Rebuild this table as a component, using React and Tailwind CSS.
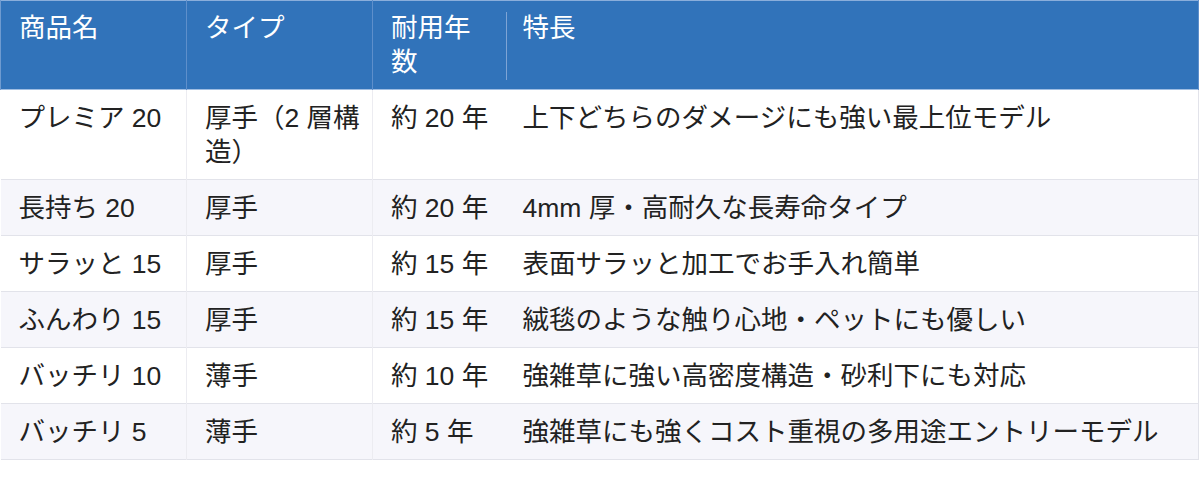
const rows = [
  { name: "プレミア 20", type: <>厚手（2 層構<br />造）</>, years: "約 20 年", feature: "上下どちらのダメージにも強い最上位モデル" },
  { name: "長持ち 20", type: "厚手", years: "約 20 年", feature: "4mm 厚・高耐久な長寿命タイプ" },
  { name: "サラッと 15", type: "厚手", years: "約 15 年", feature: "表面サラッと加工でお手入れ簡単" },
  { name: "ふんわり 15", type: "厚手", years: "約 15 年", feature: "絨毯のような触り心地・ペットにも優しい" },
  { name: "バッチリ 10", type: "薄手", years: "約 10 年", feature: "強雑草に強い高密度構造・砂利下にも対応" },
  { name: "バッチリ 5", type: "薄手", years: "約 5 年", feature: "強雑草にも強くコスト重視の多用途エントリーモデル" },
];

const App = () => {
  return (
    <div
      className="w-[1200px] h-[492px] bg-white text-[#222] text-[26.5px] leading-[34px]"
      style={{ fontFamily: '"Liberation Sans", "Noto Sans CJK JP", sans-serif' }}
    >
      <table className="w-[1199px] table-fixed border-collapse">
        <colgroup>
          <col className="w-[186px]" />
          <col className="w-[186px]" />
          <col className="w-[133px]" />
          <col />
        </colgroup>
        <thead>
          <tr className="bg-[#3173ba] text-white border-t border-t-[#8aaedb] border-b border-b-[#9fbde2]">
            <th className="pl-[18px] pr-3 pt-[10px] pb-[10px] text-left align-top font-normal border-l border-l-[#6f9bd0]">
              商品名
            </th>
            <th className="pl-[18px] pr-3 pt-[10px] pb-[10px] text-left align-top font-normal border-l border-l-[#5e8fcb]">
              タイプ
            </th>
            <th className="pl-[18px] pr-3 pt-[10px] pb-[10px] text-left align-top font-normal border-l border-l-[#5e8fcb]">
              耐用年数
            </th>
            <th className="relative pl-[17px] pr-3 pt-[10px] pb-[10px] text-left align-top font-normal border-r border-r-[#5e8fcb] before:absolute before:left-0 before:top-[11px] before:h-[68px] before:w-px before:bg-[#7ea4d5]">
              特長
            </th>
          </tr>
        </thead>
        <tbody>
          {rows.map((r, i) => (
            <tr
              key={i}
              className={`border-b border-b-[#e2e3ea] ${i % 2 === 1 ? "bg-[#f6f6fb]" : "bg-white"}`}
            >
              <td className="pl-[18px] pr-3 pt-[11px] pb-[10px] align-top border-r border-r-[#ececf1] whitespace-nowrap">
                {r.name}
              </td>
              <td className="pl-[18px] pr-1 pt-[11px] pb-[10px] align-top border-r border-r-[#ececf1] whitespace-nowrap">
                {r.type}
              </td>
              <td className="pl-[18px] pr-1 pt-[11px] pb-[10px] align-top whitespace-nowrap">
                {r.years}
              </td>
              <td className="pl-[17px] pr-3 pt-[11px] pb-[10px] align-top border-r border-r-[#e2e3ea] whitespace-nowrap">
                {r.feature}
              </td>
            </tr>
          ))}
        </tbody>
      </table>
    </div>
  );
};

export default App;
